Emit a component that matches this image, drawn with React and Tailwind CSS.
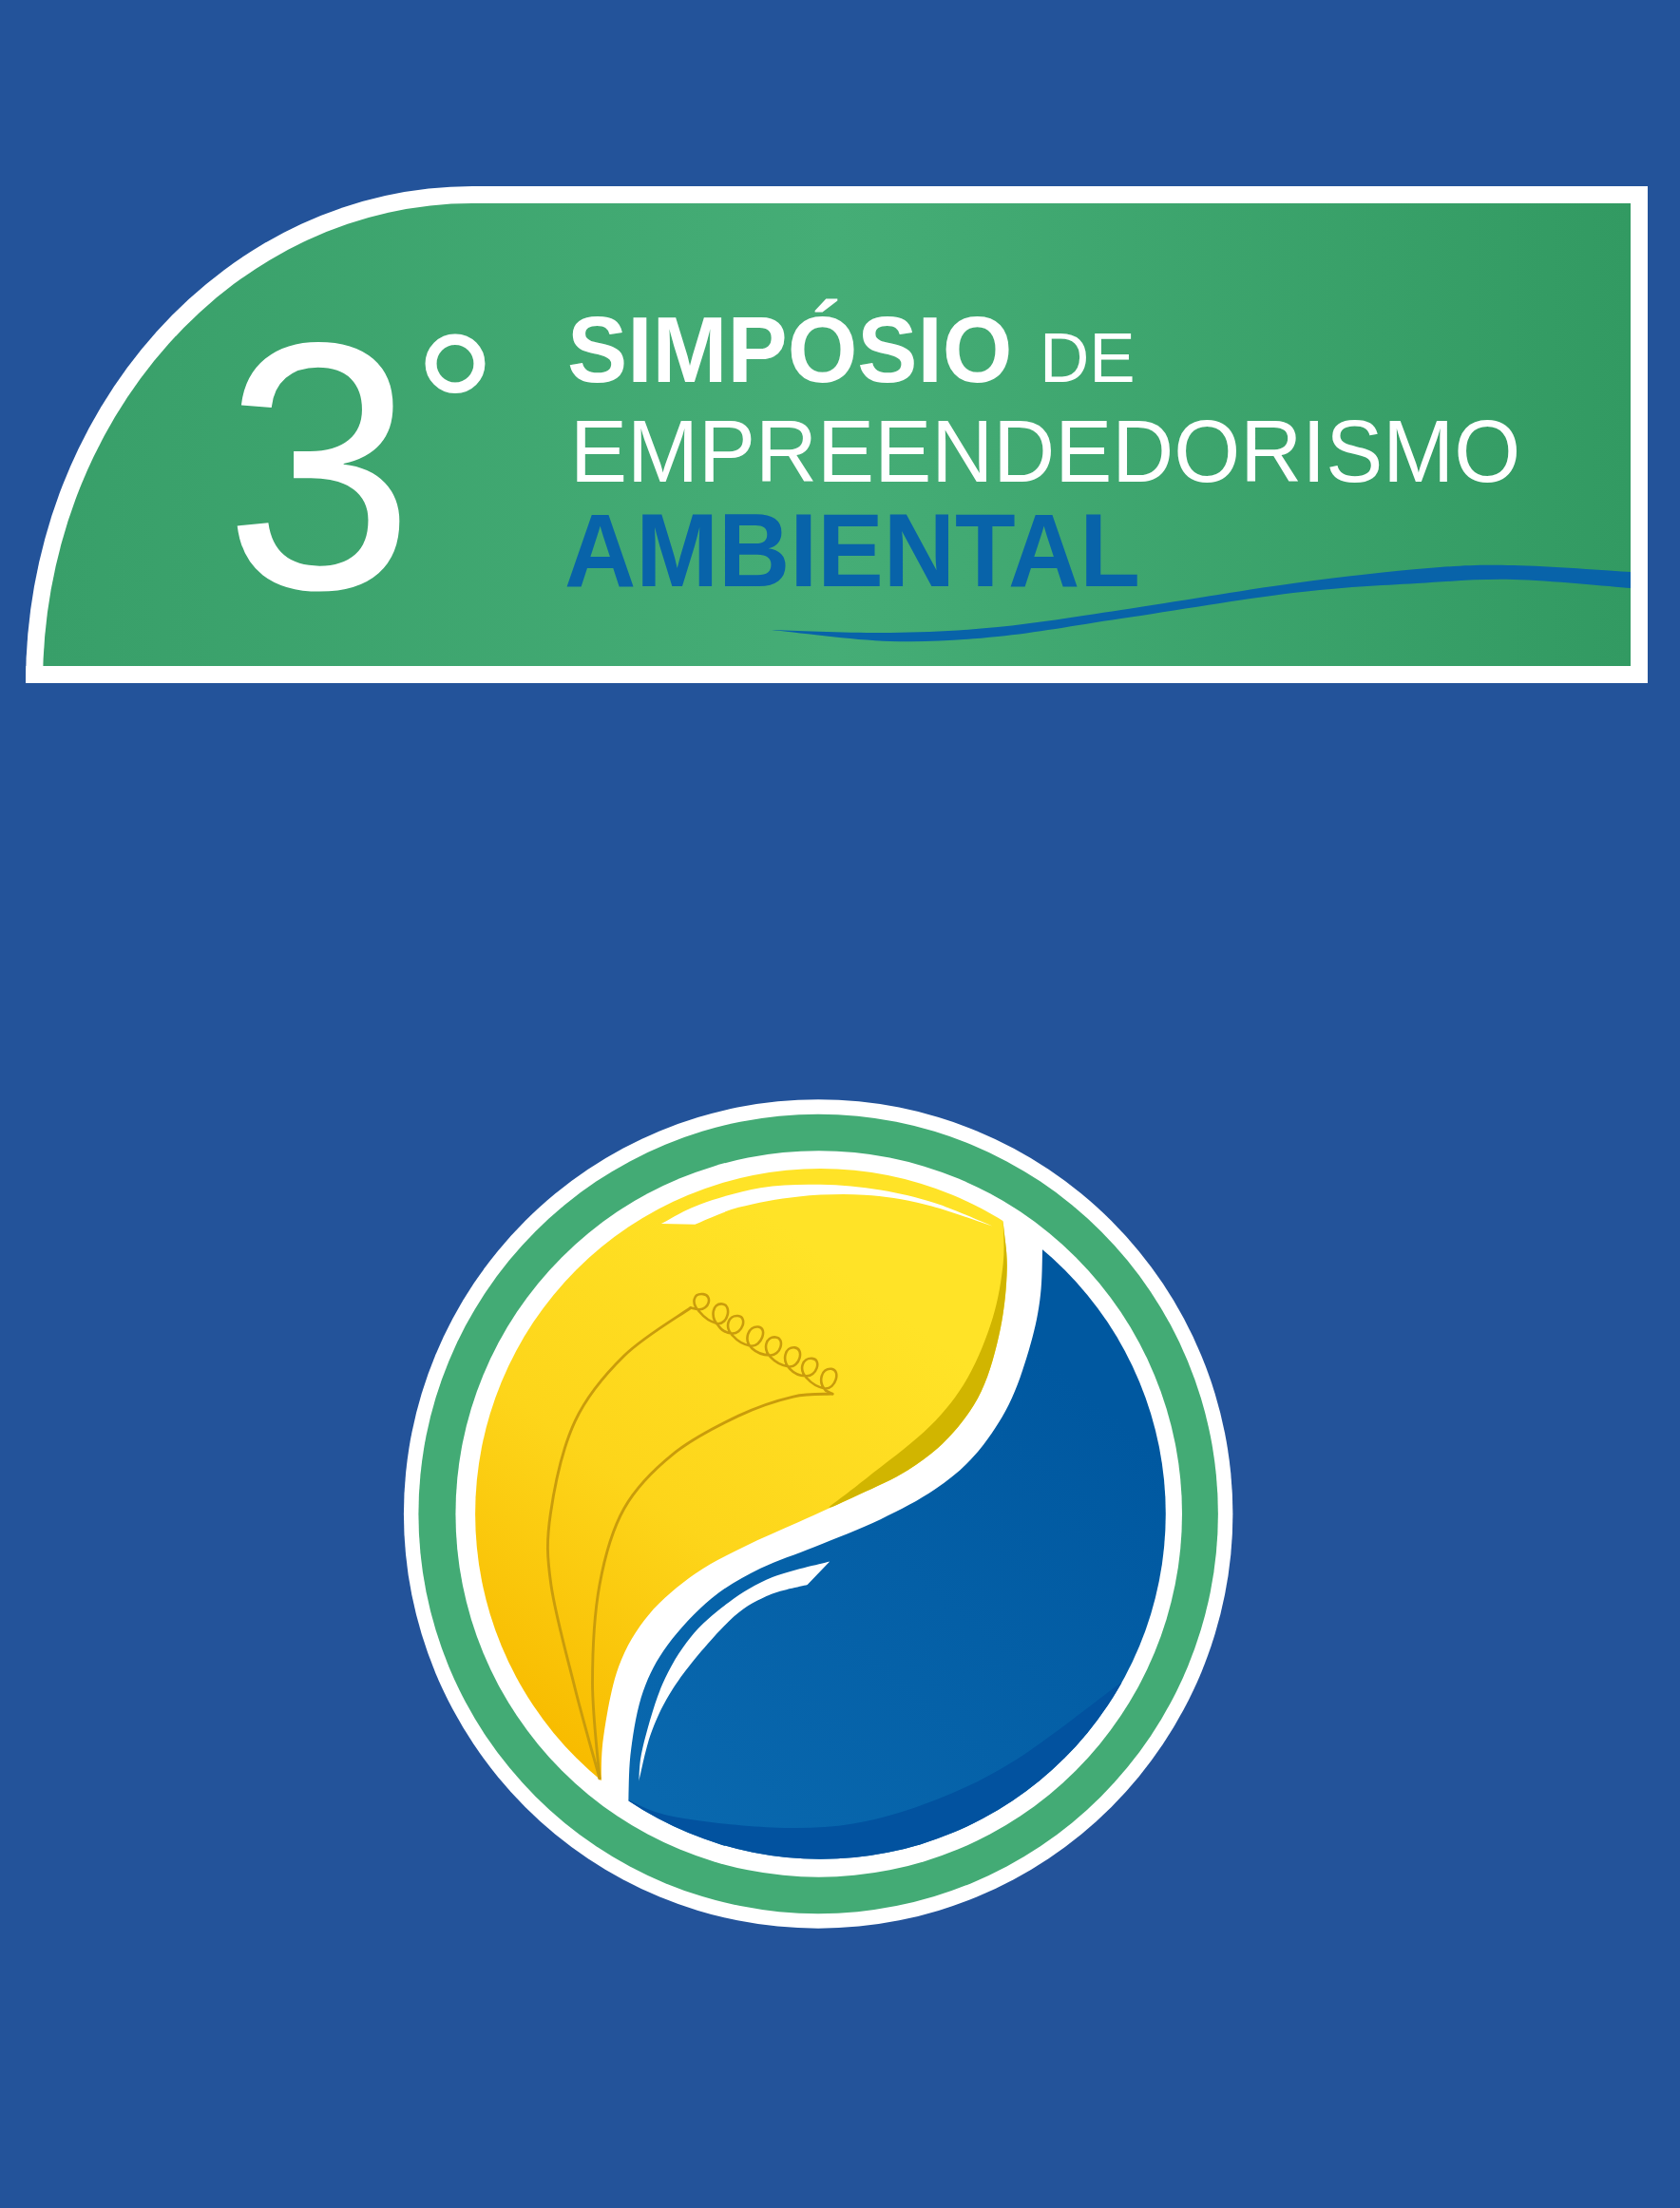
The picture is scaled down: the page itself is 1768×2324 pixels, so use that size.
const smooth = (pts, start = true) => {
  let d = start ? `M${pts[0][0]} ${pts[0][1]}` : `L${pts[0][0]} ${pts[0][1]}`;
  for (let i = 0; i < pts.length - 1; i++) {
    const p0 = pts[Math.max(i - 1, 0)];
    const p1 = pts[i];
    const p2 = pts[i + 1];
    const p3 = pts[Math.min(i + 2, pts.length - 1)];
    const c1x = p1[0] + (p2[0] - p0[0]) / 6;
    const c1y = p1[1] + (p2[1] - p0[1]) / 6;
    const c2x = p2[0] - (p3[0] - p1[0]) / 6;
    const c2y = p2[1] - (p3[1] - p1[1]) / 6;
    d += ` C${c1x.toFixed(1)} ${c1y.toFixed(1)} ${c2x.toFixed(1)} ${c2y.toFixed(1)} ${p2[0]} ${p2[1]}`;
  }
  return d;
};

const waveTop = [[812, 663], [937, 666], [1050, 660], [1180, 642], [1361, 614], [1503, 598], [1593, 595], [1716, 602]];
const waveBottom = [[1716, 619], [1593, 610], [1491, 614], [1361, 624], [1180, 651], [1050, 670], [937, 675], [812, 663]];
const wavePath = `${smooth(waveTop)} ${smooth(waveBottom, false)} Z`;

const leafEdge = [[388, 1290], [392, 1200], [420, 1070], [475, 975], [560, 900], [650, 850], [750, 805], [860, 755], [950, 710], [1025, 650], [1085, 565], [1120, 450], [1132, 340], [1125, 255], [1120, 180]];
const yellowPath = `${smooth(leafEdge)} L1120 100 L100 100 L100 1400 L388 1400 Z`;
const olivePath = `${smooth([[1125, 255], [1125, 330], [1106, 430], [1060, 540], [990, 630], [880, 720], [805, 778]])} L1300 800 L1300 255 Z`;
const highlightPath = `${smooth([[498, 258], [570, 222], [680, 192], [790, 186], [900, 196], [1000, 220], [1105, 262]])} ${smooth([[1105, 262], [980, 222], [870, 205], [750, 208], [640, 228], [560, 259]], false)} L498 258 Z`;

const blueEdge = [[438, 1400], [438, 1315], [443, 1220], [465, 1115], [510, 1030], [590, 945], [680, 890], [780, 850], [900, 800], [1000, 745], [1075, 680], [1135, 590], [1172, 490], [1192, 400], [1197, 303], [1197, 150]];
const bluePath = `${smooth(blueEdge)} L1500 150 L1500 1500 L438 1500 Z`;
const crescentPath = `${smooth([[438, 1315], [520, 1345], [700, 1365], [850, 1358], [1000, 1315], [1150, 1240], [1340, 1100]])} L1500 1100 L1500 1500 L438 1500 Z`;
const streakPath = `${smooth([[807, 877], [702, 906], [622, 952], [552, 1016], [500, 1103], [464, 1219], [457, 1280]])} ${smooth([[457, 1280], [482, 1185], [530, 1095], [622, 987], [691, 941], [766, 920]], false)} L807 877 Z`;

const stem1 = smooth([[385, 1275], [340, 1110], [296, 920], [295, 790], [340, 620], [430, 500], [552, 412]]);
const stem2 = smooth([[385, 1275], [372, 1100], [385, 920], [430, 780], [520, 680], [640, 610], [740, 575], [812, 570]]);

const loops = [
  [[566, 415], [575, 387]],
  [[601, 441], [610, 405]],
  [[627, 459], [639, 427]],
  [[662, 482], [676, 447]],
  [[697, 499], [708, 466]],
  [[732, 520], [743, 485]],
  [[763, 537], [775, 505]],
  [[798, 560], [810, 524]],
];
const curlPath = loops.reduce((d, [b, t], i) => {
  const next = loops[i + 1];
  let s = i === 0 ? `M552 412 L${b[0]} ${b[1]}` : d;
  s += ` C${b[0] + 20} ${b[1] + 2} ${t[0] + 18} ${t[1] + 2} ${t[0]} ${t[1]}`;
  s += ` C${t[0] - 18} ${t[1] - 2} ${b[0] - 14} ${b[1] - 12} ${b[0] + 2} ${b[1] + 4}`;
  if (next) s += ` Q${(b[0] + next[0][0]) / 2 - 2} ${(b[1] + next[0][1]) / 2 + 8} ${next[0][0]} ${next[0][1]}`;
  else s += " L812 570";
  return s;
}, "");

export default function App() {
  return (
    <div className="min-h-[2324px] w-full overflow-hidden bg-[#23539a] pt-[196px] font-['Liberation_Sans',Arial,sans-serif]">
      <header className="relative ml-[27px] flex h-[523px] w-[1707px] rounded-tl-[470px_523px] border-[18px] border-white bg-[linear-gradient(90deg,#389f69_0%,#45ad76_50%,#329a62_100%)]">
        <div className="flex w-[552px] shrink-0 pl-[191px] pt-[91px] text-white">
          <span className="origin-left scale-x-[0.97] text-[371px] leading-[371px]">3</span>
          <span className="ml-[-8px] mt-[13px] text-[224px] leading-[224px]">°</span>
        </div>
        <div className="flex flex-col pt-[101px]">
          <div className="flex h-[105px] items-baseline whitespace-nowrap text-white">
            <span className="origin-left scale-x-[0.957] text-[99px] font-bold leading-[105px]">SIMPÓSIO</span>
            <span className="ml-[7px] origin-left scale-x-[0.98] text-[74px] leading-none">DE</span>
          </div>
          <p className="ml-[3px] origin-left scale-x-[0.968] whitespace-nowrap text-[93px] leading-[110px] text-white">EMPREENDEDORISMO</p>
          <p className="ml-[-3px] origin-left scale-x-[0.956] whitespace-nowrap text-[109px] font-bold leading-[99px] text-[#0863a9]">AMBIENTAL</p>
        </div>
        <svg className="absolute inset-0 h-full w-full" viewBox="45 214 1671 487" aria-hidden="true">
          <path d={wavePath} fill="#0863a9" />
        </svg>
      </header>

      <div className="ml-[410px] mt-[421px] h-[900px] w-[900px]">
        <svg className="block h-[900px] w-[900px]" viewBox="0 0 1568 1568" aria-hidden="true">
          <defs>
            <linearGradient id="leaf" gradientUnits="userSpaceOnUse" x1="880" y1="380" x2="280" y2="1180">
              <stop offset="0" stopColor="#ffe327" />
              <stop offset="0.55" stopColor="#fdd51a" />
              <stop offset="1" stopColor="#f8bc00" />
            </linearGradient>
            <linearGradient id="water" gradientUnits="userSpaceOnUse" x1="1200" y1="500" x2="500" y2="1320">
              <stop offset="0" stopColor="#0058a0" />
              <stop offset="1" stopColor="#0968ae" />
            </linearGradient>
            <clipPath id="disc">
              <circle cx="790" cy="790" r="633" />
            </clipPath>
            <clipPath id="leafShape">
              <path d={yellowPath} />
            </clipPath>
          </defs>
          <circle cx="786" cy="790" r="760" fill="#ffffff" />
          <circle cx="786" cy="790" r="733" fill="#43ab75" />
          <circle cx="787" cy="790" r="666" fill="#ffffff" />
          <g clipPath="url(#disc)">
            <path d={yellowPath} fill="url(#leaf)" />
            <g clipPath="url(#leafShape)">
              <path d={olivePath} fill="#d1b500" />
            </g>
            <path d={bluePath} fill="url(#water)" />
            <path d={crescentPath} fill="#02529f" />
          </g>
          <path d={highlightPath} fill="#ffffff" />
          <path d={streakPath} fill="#ffffff" />
          <g fill="none" stroke="#c99c0c" strokeLinecap="round" strokeLinejoin="round">
            <path d={stem1} strokeWidth="5" />
            <path d={stem2} strokeWidth="5" />
            <path d={curlPath} strokeWidth="4.5" />
          </g>
        </svg>
      </div>
    </div>
  );
}
